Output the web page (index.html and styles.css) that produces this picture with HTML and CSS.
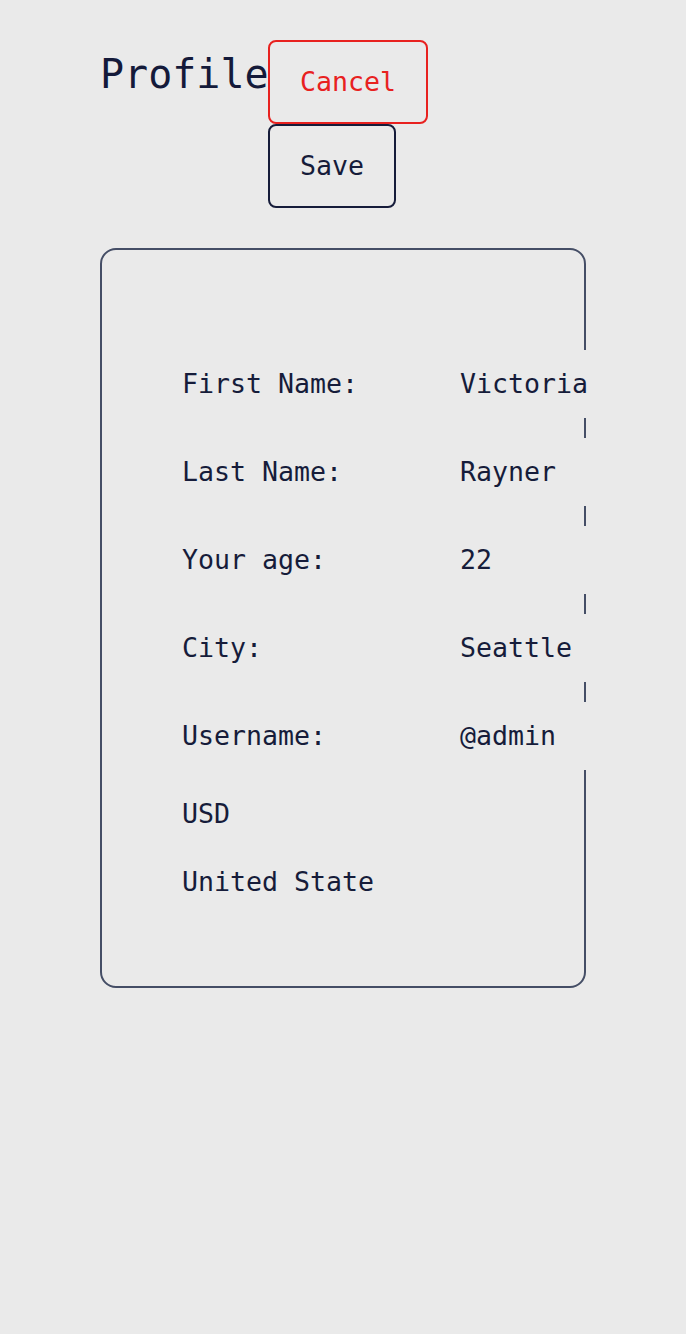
FILE: index.html
```html
<!DOCTYPE html>
<html lang="en">
<head>
<meta charset="utf-8">
<title>Profile</title>
<link rel="stylesheet" href="styles.css">
</head>
<body>
<main class="page">
  <header class="header">
    <h1 class="title">Profile</h1>
    <div class="actions">
      <button class="btn btn-cancel">Cancel</button>
      <button class="btn btn-save">Save</button>
    </div>
  </header>
  <section class="card">
    <div class="rows">
      <div class="row"><span class="label">First Name:</span><span class="value">Victoria</span></div>
      <div class="row"><span class="label">Last Name:</span><span class="value">Rayner</span></div>
      <div class="row"><span class="label">Your age:</span><span class="value">22</span></div>
      <div class="row"><span class="label">City:</span><span class="value">Seattle</span></div>
      <div class="row"><span class="label">Username:</span><span class="value">@admin</span></div>
    </div>
    <p class="extra extra-currency">USD</p>
    <p class="extra extra-country">United State</p>
  </section>
</main>
</body>
</html>
```
FILE: styles.css
```css
html, body {
  margin: 0;
  background: #eaeaea;
}

body {
  font-family: "DejaVu Sans Mono", "Liberation Mono", monospace;
  color: #161c3a;
}

.page {
  padding: 40px 100px 0;
}

.header {
  display: flex;
  align-items: flex-start;
}

.title {
  flex: none;
  width: 168px;
  margin: 10px 0 0;
  font-size: 40px;
  line-height: 48px;
  font-weight: normal;
  color: #141a3a;
  white-space: nowrap;
}

.actions {
  display: flex;
  flex-direction: column;
  align-items: flex-start;
}

.btn {
  font-family: inherit;
  font-size: 26.6px;
  line-height: 32px;
  padding: 24px 30px;
  border: 2px solid;
  border-radius: 8px;
  background: transparent;
  margin: 0;
}

.btn-cancel {
  color: #e8211f;
  border-color: #e8211f;
}

.btn-save {
  color: #161c3a;
  border-color: #161c3a;
}

.card {
  margin-top: 40px;
  border: 2px solid #454e66;
  border-radius: 16px;
  padding: 100px 80px 88px;
  font-size: 26.6px;
  line-height: 32px;
}

.rows {
  display: flex;
  flex-direction: column;
  gap: 20px;
}

.row {
  display: grid;
  grid-template-columns: 278px auto;
  align-items: center;
  width: 406px;
  height: 68px;
  background: #eaeaea;
  white-space: nowrap;
}

.extra {
  margin: 0;
}

.extra-currency {
  margin-top: 28px;
}

.extra-country {
  margin-top: 36px;
}
```
